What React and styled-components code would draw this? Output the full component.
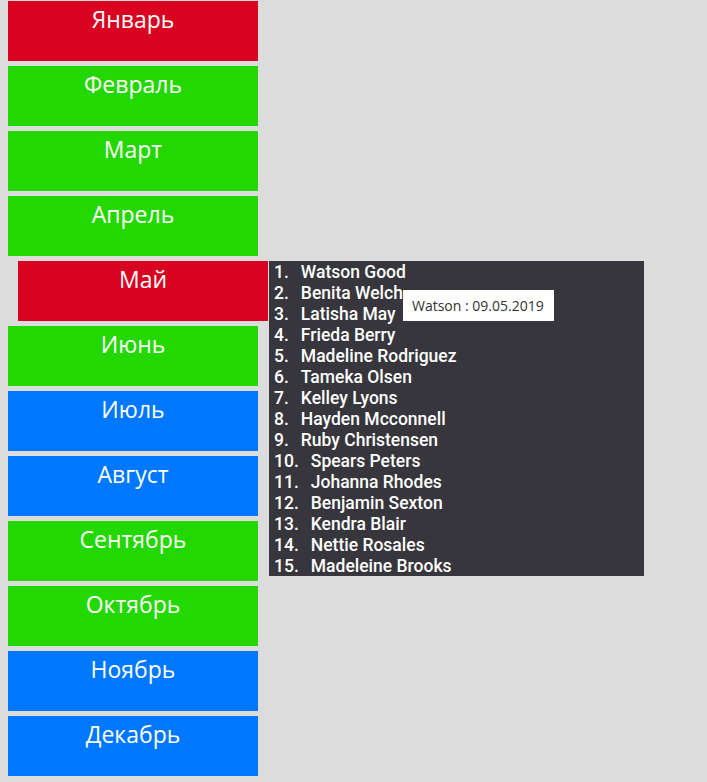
import React from 'react';
import styled, { createGlobalStyle } from 'styled-components';

const GlobalStyle = createGlobalStyle`
    body {
        margin: 1px 8px 0;
        background: #dcdcdc;
        font-family: "Open Sans", "Noto Sans", sans-serif;
    }
`;

const COLORS = {
    red: '#d90221',
    green: '#22d800',
    blue: '#0077ff',
};

const months = [
    { name: 'Январь', color: 'red' },
    { name: 'Февраль', color: 'green' },
    { name: 'Март', color: 'green' },
    { name: 'Апрель', color: 'green' },
    { name: 'Май', color: 'red', open: true },
    { name: 'Июнь', color: 'green' },
    { name: 'Июль', color: 'blue' },
    { name: 'Август', color: 'blue' },
    { name: 'Сентябрь', color: 'green' },
    { name: 'Октябрь', color: 'green' },
    { name: 'Ноябрь', color: 'blue' },
    { name: 'Декабрь', color: 'blue' },
];

const people = [
    'Watson Good',
    'Benita Welch',
    'Latisha May',
    'Frieda Berry',
    'Madeline Rodriguez',
    'Tameka Olsen',
    'Kelley Lyons',
    'Hayden Mcconnell',
    'Ruby Christensen',
    'Spears Peters',
    'Johanna Rhodes',
    'Benjamin Sexton',
    'Kendra Blair',
    'Nettie Rosales',
    'Madeleine Brooks',
];

const Calendar = styled.div`
    display: flex;
    flex-direction: column;
    gap: 5px;
`;

const MonthRow = styled.div`
    position: relative;
    display: flex;
`;

const MonthBox = styled.div`
    position: relative;
    width: 250px;
    height: 60px;
    box-sizing: border-box;
    margin-left: ${(p) => (p.$active ? '10px' : '0')};
    padding-top: 2px;
    background: ${(p) => COLORS[p.$color]};
    color: #fff;
    font-size: 23px;
    line-height: 32px;
    text-align: center;
`;

const Popup = styled.ol`
    position: absolute;
    top: 0;
    left: calc(100% + 1px);
    z-index: 2;
    width: 375px;
    height: 315px;
    margin: 0;
    padding: 1px 0 0 5px;
    box-sizing: border-box;
    list-style: none;
    background: #36363c;
    color: #fff;
    font-family: Roboto, "Noto Sans", sans-serif;
    font-size: 17.5px;
    font-weight: 500;
    line-height: 21px;
    text-align: left;
`;

const Person = styled.li`
    display: flex;
`;

const Num = styled.span`
    margin-right: 12px;
`;

const Tooltip = styled.div`
    position: absolute;
    top: 29px;
    left: 134px;
    width: 151px;
    height: 31px;
    box-sizing: border-box;
    padding: 0 9px;
    background: #fff;
    color: #333;
    font-family: "Open Sans", "Noto Sans", sans-serif;
    font-size: 14px;
    font-weight: 400;
    line-height: 31px;
    white-space: nowrap;
`;

const App = () => {
    return (
        <>
            <GlobalStyle />
            <Calendar>
                {months.map((m) => (
                    <MonthRow key={m.name}>
                        <MonthBox $color={m.color} $active={m.open}>
                            {m.name}
                            {m.open && (
                                <Popup>
                                    {people.map((p, i) => (
                                        <Person key={p}>
                                            <Num>{i + 1}.</Num>
                                            {p}
                                        </Person>
                                    ))}
                                    <Tooltip>Watson : 09.05.2019</Tooltip>
                                </Popup>
                            )}
                        </MonthBox>
                    </MonthRow>
                ))}
            </Calendar>
        </>
    );
};

export default App;
